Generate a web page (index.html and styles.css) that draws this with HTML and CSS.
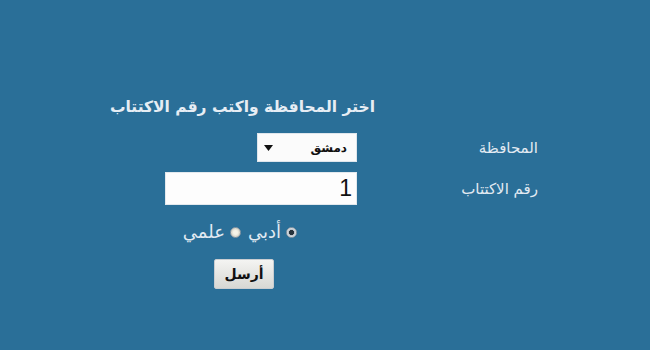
FILE: index.html
```html
<!DOCTYPE html>
<html lang="ar" dir="rtl">
<head>
<meta charset="utf-8">
<title>الاكتتاب</title>
<link rel="stylesheet" href="styles.css">
</head>
<body>
<form class="page">
  <h1 class="title">اختر المحافظة واكتب رقم الاكتتاب</h1>
  <div class="grid">
    <label class="label" for="gov">المحافظة</label>
    <div class="ctrl">
      <span class="select-wrap">
        <select id="gov" class="select">
          <option>دمشق</option>
        </select>
        <svg class="arrow" width="9" height="6" viewBox="0 0 9 6"><path d="M0 0H9L4.5 6Z" fill="#111"/></svg>
      </span>
    </div>
    <label class="label" for="num">رقم الاكتتاب</label>
    <div class="ctrl">
      <input id="num" class="input" type="text" value="1">
    </div>
  </div>
  <div class="radios">
    <label class="radio"><input type="radio" name="b" checked>أدبي</label>
    <label class="radio"><input type="radio" name="b">علمي</label>
  </div>
  <button type="button" class="btn">أرسل</button>
</form>
</body>
</html>
```
FILE: styles.css
```css
html, body {
  margin: 0;
  padding: 0;
}
body {
  background: #2a6f98;
  width: 650px;
  height: 350px;
  overflow: hidden;
  font-family: "DejaVu Sans", sans-serif;
  color: #e2eaf2;
}
.page {
  display: flex;
  flex-direction: column;
  align-items: flex-start;
  padding-top: 97px;
}
.title {
  margin: 0 275px 0 0;
  font-size: 15.5px;
  font-weight: bold;
  line-height: 20px;
  color: #e6edf4;
}
.grid {
  margin: 16px 112px 0 0;
  display: grid;
  grid-template-columns: 181px 192px;
  row-gap: 10px;
  align-items: center;
}
.label {
  font-size: 15px;
  line-height: 18px;
}
.ctrl {
  display: flex;
}
.select-wrap {
  position: relative;
  display: inline-block;
}
.select {
  appearance: none;
  -webkit-appearance: none;
  display: block;
  width: 100px;
  height: 29px;
  border: 1px solid #dfe6ec;
  border-radius: 0;
  background: #fbfbfb;
  font-family: "DejaVu Sans", sans-serif;
  font-size: 12px;
  font-weight: bold;
  color: #111;
  padding: 0 9px 0 0;
  direction: rtl;
}
.arrow {
  position: absolute;
  left: 7px;
  top: 12px;
  pointer-events: none;
}
.input {
  display: block;
  box-sizing: border-box;
  width: 192px;
  height: 33px;
  border: 1px solid #e3e9ee;
  background: #fdfdfd;
  font-family: "Liberation Sans", sans-serif;
  font-size: 23px;
  color: #111;
  padding: 0 4px 0 0;
  direction: rtl;
  outline: none;
}
.radios {
  margin: 18px 353px 0 0;
  display: flex;
  gap: 7px;
}
.radio {
  display: flex;
  align-items: center;
  gap: 5px;
  font-size: 18px;
  line-height: 18px;
  color: #e2eaf2;
}
.radio input {
  appearance: none;
  -webkit-appearance: none;
  margin: 0;
  width: 11px;
  height: 11px;
  border-radius: 50%;
  border: 1px solid #8c9aa6;
  background: radial-gradient(circle, #f6f4e8 0 30%, #d6d4c8 70%);
}
.radio input:checked {
  background: radial-gradient(circle, #26323c 0 35%, #b8c0c8 45%, #eef0f2 80%);
}
.btn {
  margin: 18px 376px 0 0;
  width: 60px;
  height: 30px;
  border: 1px solid #c9cdd1;
  border-radius: 2px;
  background: linear-gradient(#f4f4f2, #d8d8d4);
  font-family: "DejaVu Sans", sans-serif;
  font-size: 14px;
  font-weight: bold;
  color: #111;
  padding: 0;
}
```
